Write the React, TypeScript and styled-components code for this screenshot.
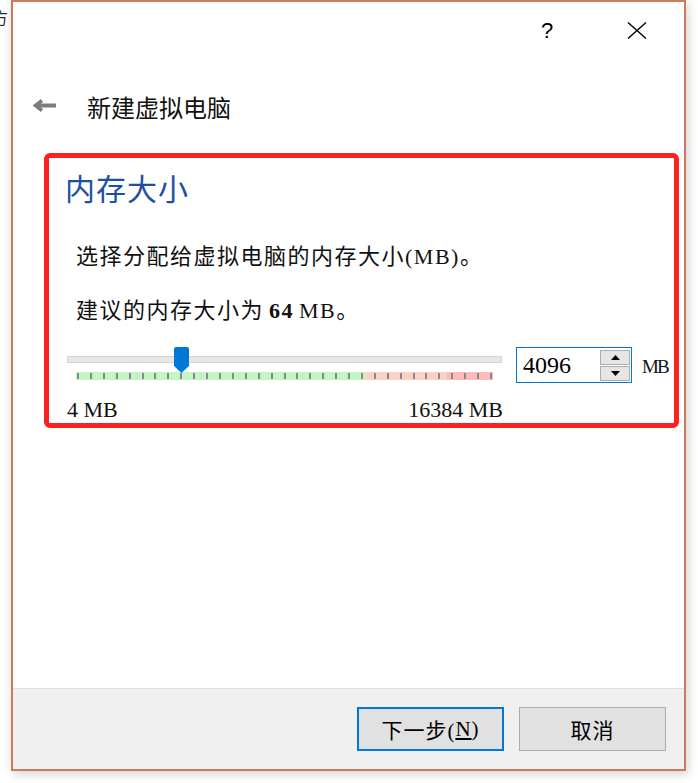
import styled, { createGlobalStyle } from "styled-components";

const CJK = `"Noto Sans CJK SC", sans-serif`;
const MIXED = `"Liberation Serif", "Noto Sans CJK SC", serif`;

const GlobalStyle = createGlobalStyle`
  html, body {
    margin: 0;
    padding: 0;
    background: #fff;
  }
  body {
    width: 698px;
    height: 783px;
    overflow: hidden;
  }
`;

const Desktop = styled.div`
  display: flex;
  width: 698px;
  height: 783px;
  background: #fff;
  overflow: hidden;
`;

const BehindStrip = styled.div`
  width: 11px;
  flex-shrink: 0;
  display: flex;
  justify-content: flex-end;
  align-items: flex-start;
  overflow: hidden;
  padding-top: 9px;
  box-sizing: border-box;
`;

const StrayGlyph = styled.span`
  font-family: ${CJK};
  font-size: 16px;
  line-height: 1;
  color: #2a2a2a;
  margin-right: 3px;
  white-space: nowrap;
`;

const Window = styled.div`
  width: 675px;
  height: 771px;
  flex-shrink: 0;
  box-sizing: border-box;
  border: 2px solid #c97b5a;
  background: #fff;
  display: flex;
  flex-direction: column;
  box-shadow: 2px 3px 10px rgba(0, 0, 0, 0.18);
`;

const TitleBar = styled.div`
  height: 57px;
  display: flex;
  justify-content: flex-end;
  align-items: center;
  padding-right: 24px;
  gap: 44px;
`;

const TitleButton = styled.div`
  width: 46px;
  height: 30px;
  display: flex;
  align-items: center;
  justify-content: center;
  font-family: "Liberation Sans", sans-serif;
  font-size: 22px;
  color: #000;
`;

const HeaderRow = styled.div`
  height: 92px;
  display: flex;
  align-items: center;
  padding-left: 19px;
  gap: 31px;
`;

const WizardTitle = styled.div`
  font-family: ${CJK};
  font-size: 24px;
  line-height: 1;
  color: #111;
  margin-top: 3px;
`;

const Main = styled.div`
  flex: 1;
  display: flex;
  flex-direction: column;
`;

const Highlight = styled.div`
  margin: 2px 5px 0 31px;
  border: 5px solid #fb2121;
  border-radius: 6px;
  padding: 14px 0 2px 0;
  display: flex;
  flex-direction: column;
`;

const PageHeading = styled.div`
  font-family: ${CJK};
  font-size: 30px;
  line-height: 1;
  letter-spacing: 1px;
  color: #1d4fa5;
  margin-left: 16px;
`;

const Text = styled.div<{ $gap: number }>`
  font-family: ${MIXED};
  font-size: 22px;
  line-height: 1;
  letter-spacing: 1.5px;
  color: #111;
  margin: ${(p) => p.$gap}px 0 0 27px;
  white-space: nowrap;
`;

const Strong = styled.b`
  margin: 0 5px;
`;

const SliderRow = styled.div`
  display: flex;
  align-items: flex-start;
  margin: 25px 0 0 18px;
`;

const SliderColumn = styled.div`
  position: relative;
  width: 436px;
  display: flex;
  flex-direction: column;
`;

const Groove = styled.div`
  margin-top: 9px;
  width: 435px;
  height: 7px;
  box-sizing: border-box;
  background: #e7e7e7;
  border: 1px solid #d4d4d4;
`;

const TickStrip = styled.div<{ $warn: number; $danger: number }>`
  margin: 9px 0 0 9px;
  width: 417px;
  height: 8px;
  padding: 0 1px;
  box-sizing: border-box;
  display: flex;
  justify-content: space-between;
  align-items: center;
  background: linear-gradient(
    to right,
    #c5f4c5 0%,
    #c5f4c5 ${(p) => p.$warn}%,
    #fcd2c6 ${(p) => p.$warn}%,
    #fcd2c6 ${(p) => p.$danger}%,
    #fcbcbc ${(p) => p.$danger}%,
    #fcbcbc 100%
  );
`;

const Tick = styled.span`
  width: 2px;
  height: 6px;
  background: #8a8a8a;
`;

const Handle = styled.svg`
  position: absolute;
  top: 0;
  width: 15px;
  height: 26px;
`;

const RangeLabels = styled.div`
  margin-top: 19px;
  display: flex;
  justify-content: space-between;
  font-family: ${MIXED};
  font-size: 22px;
  line-height: 1;
  color: #111;
`;

const SpinBox = styled.div`
  margin-left: 13px;
  width: 116px;
  height: 36px;
  box-sizing: border-box;
  border: 1px solid #0078d7;
  background: #fff;
  display: flex;
  align-items: center;
`;

const SpinValue = styled.div`
  flex: 1;
  padding-left: 6px;
  font-family: "Liberation Serif", serif;
  font-size: 24px;
  line-height: 1;
  color: #000;
`;

const SpinButtons = styled.div`
  display: flex;
  flex-direction: column;
  gap: 1px;
  margin-right: 1px;
`;

const SpinButton = styled.div`
  width: 30px;
  height: 15px;
  box-sizing: border-box;
  background: #e5e5e5;
  border: 1px solid #adadad;
  display: flex;
  align-items: center;
  justify-content: center;
`;

const Unit = styled.div`
  margin: 10px 0 0 10px;
  font-family: "Liberation Serif", serif;
  font-size: 19px;
  letter-spacing: -2px;
  line-height: 1;
  color: #111;
`;

const Footer = styled.div`
  height: 81px;
  box-sizing: border-box;
  border-top: 1px solid #dfdfdf;
  background: #f0f0f0;
  display: flex;
  justify-content: flex-end;
  align-items: flex-start;
  padding: 18px 18px 0 0;
  gap: 15px;
`;

const DialogButton = styled.button<{ $primary?: boolean }>`
  width: 147px;
  height: 44px;
  box-sizing: border-box;
  background: #e1e1e1;
  border: ${(p) => (p.$primary ? "2px solid #0078d7" : "1px solid #adadad")};
  font-family: ${MIXED};
  font-size: 21px;
  letter-spacing: 1px;
  color: #000;
  padding: 0;
  display: flex;
  align-items: center;
  justify-content: center;
`;

const Mnemonic = styled.span`
  text-decoration: underline;
  text-underline-offset: 2px;
`;

const MIN_MB = 4;
const MAX_MB = 16384;
const VALUE_MB = 4096;
const TICKS = 33;

export default function App() {
  const frac = (VALUE_MB - MIN_MB) / (MAX_MB - MIN_MB);
  const handleLeft = Math.round(frac * (435 - 15)) + 2;

  return (
    <>
      <GlobalStyle />
      <Desktop>
        <BehindStrip>
          <StrayGlyph>方</StrayGlyph>
        </BehindStrip>
        <Window>
          <TitleBar>
            <TitleButton>?</TitleButton>
            <TitleButton>
              <svg width="20" height="17" viewBox="0 0 20 17">
                <path d="M1 0.5 L19 16.5 M19 0.5 L1 16.5" stroke="#000" strokeWidth="1.4" fill="none" />
              </svg>
            </TitleButton>
          </TitleBar>

          <HeaderRow>
            <svg width="24" height="13" viewBox="0 0 24 13">
              <path d="M4 6.5 H24" stroke="#7c7c7c" strokeWidth="4" fill="none" />
              <path d="M10 1.5 L3.5 6.5 L10 11.5" stroke="#7c7c7c" strokeWidth="3.6" fill="none" />
            </svg>
            <WizardTitle>新建虚拟电脑</WizardTitle>
          </HeaderRow>

          <Main>
            <Highlight>
              <PageHeading>内存大小</PageHeading>
              <Text $gap={44}>选择分配给虚拟电脑的内存大小(MB)。</Text>
              <Text $gap={32}>
                建议的内存大小为<Strong>64</Strong>MB。
              </Text>

              <SliderRow>
                <SliderColumn>
                  <Groove />
                  <TickStrip $warn={69.3} $danger={89}>
                    {Array.from({ length: TICKS }, (_, i) => (
                      <Tick key={i} />
                    ))}
                  </TickStrip>
                  <RangeLabels>
                    <span>4 MB</span>
                    <span>16384 MB</span>
                  </RangeLabels>
                  <Handle viewBox="0 0 15 26" style={{ left: handleLeft }}>
                    <path d="M2 0 H13 Q15 0 15 2 V19 L7.5 26 L0 19 V2 Q0 0 2 0 Z" fill="#0078d7" />
                  </Handle>
                </SliderColumn>

                <SpinBox>
                  <SpinValue>4096</SpinValue>
                  <SpinButtons>
                    <SpinButton>
                      <svg width="9" height="5" viewBox="0 0 9 5">
                        <path d="M0 5 L4.5 0 L9 5 Z" fill="#000" />
                      </svg>
                    </SpinButton>
                    <SpinButton>
                      <svg width="9" height="5" viewBox="0 0 9 5">
                        <path d="M0 0 L4.5 5 L9 0 Z" fill="#000" />
                      </svg>
                    </SpinButton>
                  </SpinButtons>
                </SpinBox>
                <Unit>MB</Unit>
              </SliderRow>
            </Highlight>
          </Main>

          <Footer>
            <DialogButton $primary>
              下一步(<Mnemonic>N</Mnemonic>)
            </DialogButton>
            <DialogButton>取消</DialogButton>
          </Footer>
        </Window>
      </Desktop>
    </>
  );
}
